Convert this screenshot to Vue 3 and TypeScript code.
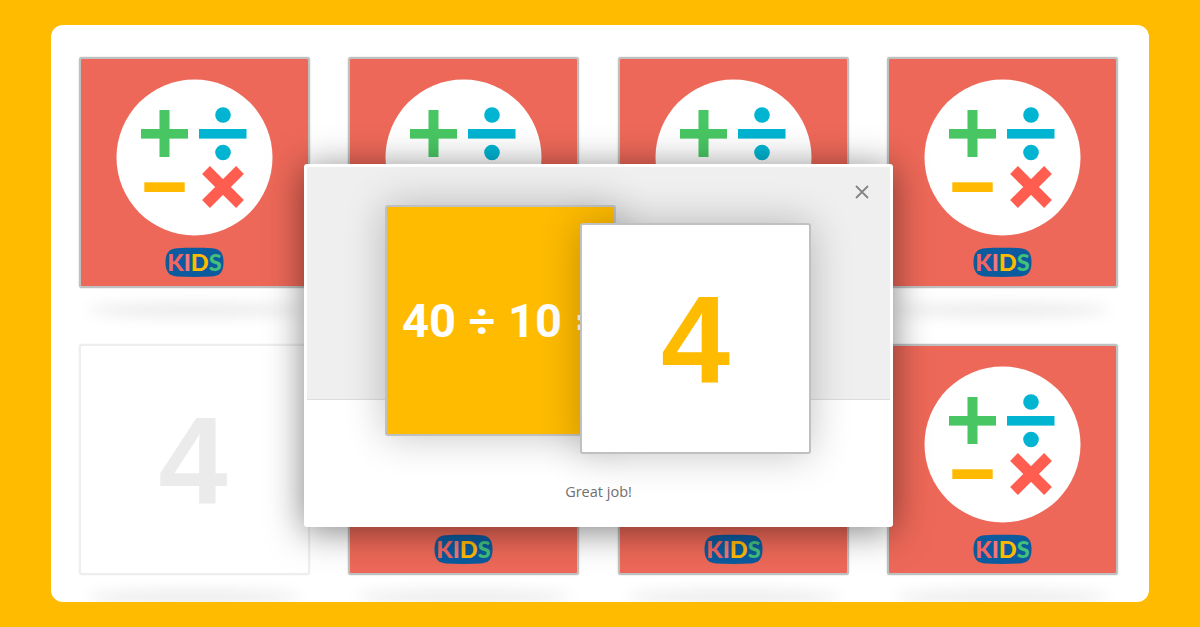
<template>
  <div class="page">
    <div class="board">
      <div class="grid">
        <div v-for="card in cards" :key="card.id" class="card" :class="{ 'card-done': card.done }">
          <span v-if="card.done" class="card-num">4</span>
          <svg v-else class="card-art" viewBox="0 0 227 227" width="227" height="227">
            <circle cx="113.5" cy="98.5" r="78" fill="#fff" />
            <rect x="60" y="70" width="47" height="9.6" fill="#48c663" />
            <rect x="78.5" y="51" width="10" height="47" fill="#48c663" />
            <rect x="118" y="70" width="47.5" height="9.6" fill="#00b4d2" />
            <circle cx="142" cy="56" r="7.8" fill="#00b4d2" />
            <circle cx="142" cy="93.5" r="7.8" fill="#00b4d2" />
            <rect x="63.3" y="123.3" width="40.4" height="9.7" fill="#ffb900" />
            <path d="M125 111 L159 145 M159 111 L125 145" stroke="#ff5d50" stroke-width="11" fill="none" />
            <path
              d="M96 189.2 C107 188.6 120 188.6 131 189.2 C139 189.700 142.500 194 142.500 203.300 C142.500 212.600 139 217 131 217.500 C120 218.100 107 218.100 96 217.500 C88 217 84.500 212.600 84.500 203.300 C84.500 194 88 189.700 96 189.200 Z"
              fill="#0b5b9e"
            />
            <text v-if="!card.covered" class="kids" x="113.5" y="212" text-anchor="middle">
              <tspan fill="#f4655f">K</tspan><tspan fill="#f0787a">I</tspan><tspan fill="#ffb900">D</tspan><tspan fill="#43c07a">S</tspan>
            </text>
          </svg>
        </div>
      </div>

      <div class="modal">
        <div class="modal-top">
          <svg class="close" viewBox="0 0 14 14" width="14" height="14">
            <path d="M1 1 L13 13 M13 1 L1 13" stroke="#848484" stroke-width="1.8" fill="none" />
          </svg>
          <div class="flash flash-q">40 ÷ 10 =</div>
          <div class="flash flash-a">4</div>
        </div>
        <div class="modal-bottom">Great job!</div>
      </div>
    </div>
  </div>
</template>

<script setup lang="ts">
// ids 2 and 3 sit with their badge fully behind the modal
const cards: { id: number; done?: boolean; covered?: boolean }[] = [
  { id: 1 }, { id: 2, covered: true }, { id: 3, covered: true }, { id: 4 },
  { id: 5, done: true }, { id: 6 }, { id: 7 }, { id: 8 },
]
</script>

<style>
html, body { margin: 0; background: #ffbb00; }
</style>

<style scoped>
.page {
  width: 1200px;
  height: 627px;
  padding: 25px 51px;
  box-sizing: border-box;
  background: #ffbb00;
  overflow: hidden;
}
.board {
  position: relative;
  height: 577px;
  padding: 32px 31px 0 28px;
  box-sizing: border-box;
  background: #fff;
  border-radius: 12px;
  overflow: hidden;
}
.grid {
  display: grid;
  grid-template-columns: repeat(4, 231px);
  grid-auto-rows: 231px;
  column-gap: 38.33px;
  row-gap: 56px;
}
.card {
  position: relative;
  box-sizing: border-box;
  background: #ed6858;
  border: 2px solid #bfc0c0;
  border-radius: 3px;
  box-shadow: 0 0 1.5px #b5b5b5;
}
.card::after {
  content: "";
  position: absolute;
  left: 6px;
  right: 6px;
  top: 244px;
  height: 14px;
  border-radius: 50%;
  background: rgba(0, 0, 0, 0.08);
  filter: blur(7px);
}
.card-done {
  background: #fff;
  border-color: #eeeeee;
  box-shadow: 0 0 1.5px #e4e4e4;
  display: flex;
  align-items: center;
  justify-content: center;
  padding-right: 3px;
}
.card-num {
  font: bold 124px "Liberation Sans", Arial, sans-serif;
  color: #ebebeb;
}
.card-art { display: block; }
.kids {
  font: 900 23.5px Lato, "Liberation Sans", sans-serif;
}

.modal {
  position: absolute;
  left: 253px;
  top: 139px;
  width: 589px;
  height: 363px;
  padding: 3px 3px 0;
  box-sizing: border-box;
  background: #fff;
  border-radius: 3px;
  box-shadow: 0 4px 36px rgba(0, 0, 0, 0.5);
  display: flex;
  flex-direction: column;
}
.modal-top {
  position: relative;
  height: 233px;
  flex: none;
  background: #efefef;
  border-bottom: 1px solid #dddddd;
  box-sizing: border-box;
}
.close {
  position: absolute;
  left: 548px;
  top: 18px;
}
.flash {
  position: absolute;
  width: 231px;
  height: 231px;
  box-sizing: border-box;
  border: 2px solid #bfc0c0;
  border-radius: 3px;
  box-shadow: 0 0 40px rgba(0, 0, 0, 0.24);
  display: flex;
  align-items: center;
  white-space: nowrap;
  overflow: hidden;
}
.flash-q {
  left: 78px;
  top: 38px;
  padding-left: 15px;
  background: #ffbb00;
  color: #fff;
  font: 700 47px Roboto, sans-serif;
  word-spacing: 1px;
}
.flash-a {
  left: 273px;
  top: 56px;
  justify-content: center;
  background: #fff;
  color: #ffbb00;
  font: bold 124px "Liberation Sans", Arial, sans-serif;
}
.modal-bottom {
  flex: 1;
  padding-top: 83px;
  box-sizing: border-box;
  text-align: center;
  font: 14.5px "Open Sans", sans-serif;
  color: #707070;
  line-height: 18px;
}
</style>
